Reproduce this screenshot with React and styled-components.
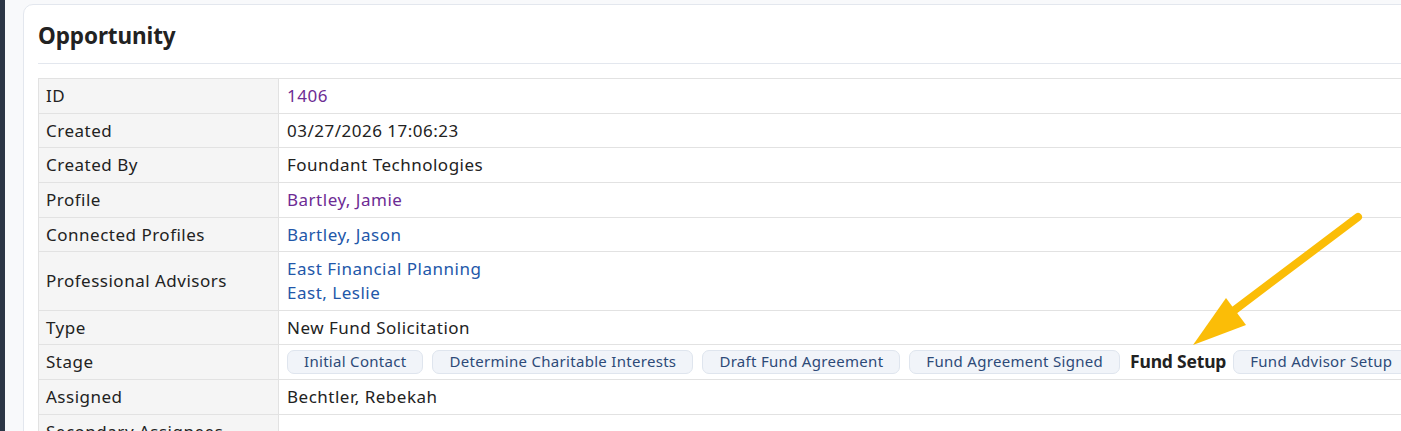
import React from "react";
import styled, { createGlobalStyle } from "styled-components";

const Global = createGlobalStyle`
  html, body { margin: 0; padding: 0; }
  body {
    font-family: "Noto Sans", "Open Sans", sans-serif;
    background: #f8f9fb;
    overflow: hidden;
    width: 1401px;
    height: 431px;
  }
`;

const Shell = styled.div`
  display: flex;
  height: 431px;
  overflow: hidden;
  position: relative;
`;

const SideStrip = styled.div`
  width: 5px;
  flex: 0 0 5px;
  background: #2c3646;
`;

const Main = styled.div`
  flex: 1;
  padding: 4px 0 0 18px;
  min-width: 0;
`;

const Card = styled.section`
  width: 1500px;
  background: #fff;
  border: 1px solid #e3e7ee;
  border-radius: 10px;
  padding: 14px 0 0 14px;
  height: 600px;
  box-sizing: border-box;
`;

const Title = styled.h2`
  margin: 0;
  font-size: 22.5px;
  font-weight: 700;
  color: #222;
  line-height: 34px;
  padding-bottom: 10px;
  border-bottom: 1px solid #e3e7ee;
  letter-spacing: -0.1px;
`;

const Table = styled.table`
  margin-top: 14px;
  border-collapse: collapse;
  width: 100%;
  font-size: 17px;
  letter-spacing: 0.5px;
  color: #222;
`;

const Row = styled.tr``;

const Label = styled.th`
  width: 225px;
  text-align: left;
  font-weight: 400;
  background: #f5f5f5;
  border: 1px solid #e2e2e2;
  padding: 5px 7px;
  line-height: 23.65px;
  vertical-align: middle;
  white-space: nowrap;
`;

const Value = styled.td`
  border: 1px solid #e2e2e2;
  border-right: none;
  padding: 5px 8px;
  line-height: 23.65px;
  vertical-align: middle;
`;

const Link = styled.a`
  display: block;
  text-decoration: none;
  color: ${(p) => (p.$visited ? "#6d2b94" : "#2257a9")};
`;

const Stages = styled.div`
  display: flex;
  align-items: center;
  gap: 9px;
  white-space: nowrap;
  letter-spacing: 0;
`;

const StageButton = styled.span`
  display: inline-flex;
  align-items: center;
  height: 24px;
  box-sizing: border-box;
  padding: 0 16px;
  border: 1px solid #dfe5ee;
  border-radius: 7px;
  background: #f1f4f9;
  color: #2d4a78;
  font-size: 15px;
  letter-spacing: 0.3px;
`;

const CurrentStage = styled.span`
  font-weight: 700;
  font-size: 17.5px;
  color: #222;
  letter-spacing: -0.2px;
  margin: 0 -2px 0 1px;
`;

const Arrow = styled.svg`
  position: absolute;
  left: 0;
  top: 0;
  pointer-events: none;
`;

const stages = [
  "Initial Contact",
  "Determine Charitable Interests",
  "Draft Fund Agreement",
  "Fund Agreement Signed",
  "Fund Setup",
  "Fund Advisor Setup",
];

export default function App() {
  return (
    <>
      <Global />
      <Shell>
        <SideStrip />
        <Main>
          <Card>
            <Title>Opportunity</Title>
            <Table>
              <tbody>
                <Row>
                  <Label>ID</Label>
                  <Value><Link $visited href="#">1406</Link></Value>
                </Row>
                <Row>
                  <Label>Created</Label>
                  <Value>03/27/2026 17:06:23</Value>
                </Row>
                <Row>
                  <Label>Created By</Label>
                  <Value>Foundant Technologies</Value>
                </Row>
                <Row>
                  <Label>Profile</Label>
                  <Value><Link $visited href="#">Bartley, Jamie</Link></Value>
                </Row>
                <Row>
                  <Label>Connected Profiles</Label>
                  <Value><Link href="#">Bartley, Jason</Link></Value>
                </Row>
                <Row>
                  <Label>Professional Advisors</Label>
                  <Value>
                    <Link href="#">East Financial Planning</Link>
                    <Link href="#">East, Leslie</Link>
                  </Value>
                </Row>
                <Row>
                  <Label>Type</Label>
                  <Value>New Fund Solicitation</Value>
                </Row>
                <Row>
                  <Label>Stage</Label>
                  <Value>
                    <Stages>
                      {stages.map((s) =>
                        s === "Fund Setup" ? (
                          <CurrentStage key={s}>{s}</CurrentStage>
                        ) : (
                          <StageButton key={s}>{s}</StageButton>
                        )
                      )}
                    </Stages>
                  </Value>
                </Row>
                <Row>
                  <Label>Assigned</Label>
                  <Value>Bechtler, Rebekah</Value>
                </Row>
                <Row>
                  <Label>Secondary Assignees</Label>
                  <Value></Value>
                </Row>
              </tbody>
            </Table>
          </Card>
        </Main>
        <Arrow width="1401" height="431" viewBox="0 0 1401 431">
          <line x1="1358" y1="217" x2="1232" y2="312" stroke="#fbbd07" strokeWidth="8" strokeLinecap="round" />
          <polygon points="1193,345 1226,298 1246,325" fill="#fbbd07" />
        </Arrow>
      </Shell>
    </>
  );
}
